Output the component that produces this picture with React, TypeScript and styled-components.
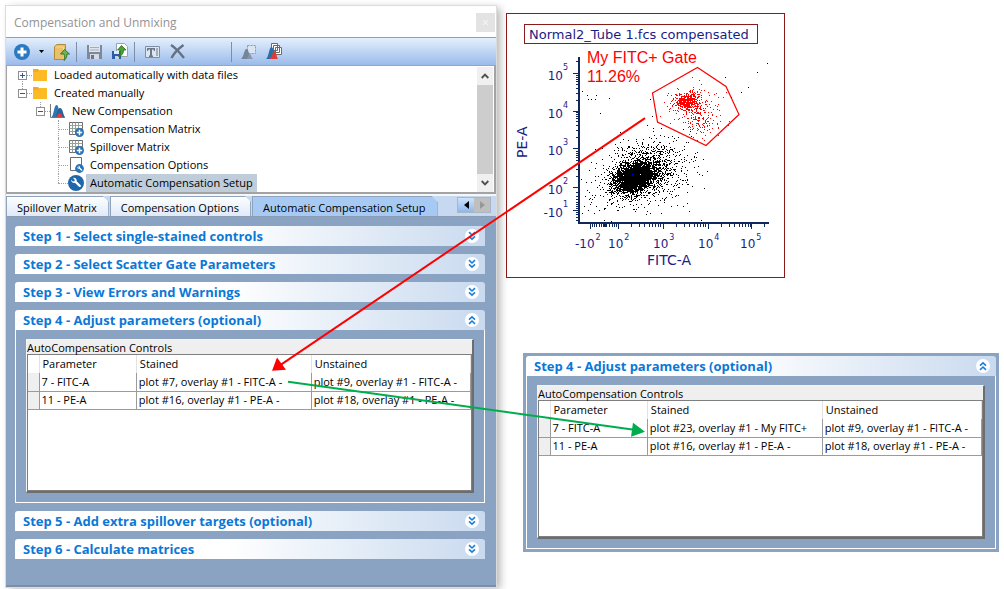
import React from "react";
import styled, { createGlobalStyle, css } from "styled-components";

const GlobalStyle = createGlobalStyle`
  *, *::before, *::after { box-sizing: border-box; }
  body {
    margin: 0;
    background: #fff;
    color: #000;
    font: 11px/18px "Open Sans", "Noto Sans", sans-serif;
  }
  button { font: inherit; color: inherit; margin: 0; padding: 0; border: 0; background: none; }
`;

const steel = "#8aa3c2";
const navy = "#1c1c86";
const maroon = "#8b1a1a";

/* ---------- page ---------- */

const Page = styled.main`
  position: relative;
  display: grid;
  grid-template-columns: minmax(0, 490fr) minmax(0, 493fr);
  column-gap: 10px;
  align-items: start;
  padding: 6px 5px 3px 6px;
`;

const Aside = styled.div`
  display: flex;
  flex-direction: column;
  align-items: flex-start;
  gap: 75px;
  padding-top: 7px;
`;

const Annotations = styled.svg`
  position: absolute;
  inset: 0;
  width: 100%;
  height: 100%;
  pointer-events: none;
`;

/* ---------- window ---------- */

const Window = styled.section`
  background: ${steel};
  border-bottom: 2px solid #7f8fa3;
  box-shadow: 0 0 0 1px #dcdcdc, 4px 2px 8px rgba(0, 0, 0, 0.3);
`;

const TitleBar = styled.header`
  display: flex;
  align-items: center;
  justify-content: space-between;
  height: 32px;
  padding: 2px 1px 0 8px;
  background: #fff;
  border-bottom: 1px solid #9d9d9d;
`;

const Title = styled.h1`
  margin: 0;
  font-size: 12px;
  font-weight: 400;
  color: #939393;
`;

const CloseButton = styled.button`
  width: 19px;
  height: 19px;
  background: #e3e3e3;
  color: #f8f8f8;
  font-size: 12px;
  line-height: 16px;
`;

const Toolbar = styled.div`
  display: flex;
  align-items: center;
  height: 27px;
  padding-left: 8px;
  background: linear-gradient(#e4effd, #9bbbea);
`;

const ToolButton = styled.button<{ $gap?: number }>`
  display: flex;
  flex: none;
  margin-right: ${(p) => p.$gap ?? 0}px;
`;

const ToolDivider = styled.span<{ $gap: number }>`
  width: 1px;
  height: 20px;
  margin-right: ${(p) => p.$gap}px;
  background: #7d8ea6;
`;

/* ---------- tree ---------- */

const TreePane = styled.div`
  display: flex;
  height: 129px;
  background: #fff;
  border: 1px solid #a3a3a3;
  border-width: 1px 2px 2px 1px;
`;

const Tree = styled.ul`
  flex: 1;
  margin: 0;
  padding: 0 0 0 7px;
  list-style: none;
`;

const TreeRow = styled.li<{ $level: number }>`
  display: flex;
  align-items: center;
  height: 18px;
  padding-left: ${(p) => p.$level * 18}px;
`;

const Branch = styled.span<{ $line: "down" | "up" | "full" }>`
  position: relative;
  display: flex;
  align-items: center;
  width: 18px;
  height: 18px;
  padding-left: 4px;
  &::before {
    content: "";
    position: absolute;
    left: 8px;
    top: ${(p) => (p.$line === "down" ? 9 : 0)}px;
    bottom: ${(p) => (p.$line === "up" ? 9 : 0)}px;
    border-left: 1px dotted #a0a0a0;
  }
  &::after {
    content: "";
    position: absolute;
    left: 8px;
    right: 0;
    top: 9px;
    border-top: 1px dotted #a0a0a0;
  }
`;

const Expander = styled.button`
  position: relative;
  z-index: 1;
  display: flex;
  width: 9px;
  height: 9px;
  background: #fff;
`;

const TreeIcon = styled.span`
  display: flex;
  align-items: center;
  width: 18px;
  height: 18px;
`;

const TreeLabel = styled.span<{ $selected?: boolean }>`
  padding: 0 4px;
  white-space: nowrap;
  background: ${(p) => (p.$selected ? "#bfcddb" : "transparent")};
`;

const ScrollBar = styled.div`
  display: flex;
  flex-direction: column;
  width: 16px;
  margin: 1px 1px 0 0;
  background: #f0f0f0;
`;

const ScrollButton = styled.button`
  display: flex;
  align-items: center;
  justify-content: center;
  height: 18px;
`;

const ScrollThumb = styled.div`
  flex: 1;
  background: #cdcdcd;
`;

/* ---------- tabs ---------- */

const TabStrip = styled.div`
  display: flex;
  align-items: flex-end;
  justify-content: space-between;
  height: 23px;
  padding-right: 5px;
  background: #c6d9f1;
  border-top: 2px solid #f4f6f9;
  border-bottom: 1px solid #8b9db5;
`;

const TabList = styled.div`
  display: flex;
  gap: 1px;
`;

const Tab = styled.button<{ $active?: boolean }>`
  height: 20px;
  padding: 2px 11px 0 10px;
  white-space: nowrap;
  clip-path: polygon(0 0, calc(100% - 6px) 0, 100% 6px, 100% 100%, 0 100%);
  border: 1px solid #8fa3bd;
  border-bottom: 0;
  line-height: 18px;
  background: ${(p) => (p.$active ? "#a6caf3" : "linear-gradient(#fdfeff, #dfeaf8)")};
`;

const TabScroller = styled.div`
  display: flex;
  align-self: flex-start;
  margin-top: 1px;
  border: 1px solid #a9b6c6;
`;

const TabArrow = styled.button`
  display: flex;
  align-items: center;
  justify-content: center;
  width: 16px;
  height: 14px;
  background: linear-gradient(#cfe2fb, #8fb7ec);
  &:disabled { background: #bfbfbf; }
`;

/* ---------- steps ---------- */

const Steps = styled.div`
  display: flex;
  flex-direction: column;
  gap: 8px;
  padding: 9px 11px 26px 9px;
`;

const StepHeader = styled.button`
  display: flex;
  align-items: center;
  justify-content: space-between;
  width: 100%;
  height: 20px;
  padding: 0 6px 0 8px;
  border-radius: 3px 3px 0 0;
  background: linear-gradient(90deg, #fff 45%, #c9daef);
  color: #0a78d6;
  font-size: 13px;
  font-weight: 700;
  white-space: nowrap;
`;

const StepBody = styled.div`
  padding: 9px 10px;
  border: 1px solid #fff;
  border-top: 0;
`;

const Callout = styled.div`
  align-self: stretch;
  margin-left: 17px;
  padding: 3px;
  background: ${steel};
`;

/* ---------- controls grid ---------- */

const GridBox = styled.div`
  height: 154px;
  border: 1px solid;
  border-color: #f4f4f4 #6d6d6d #6d6d6d #f4f4f4;
  border-right-width: 2px;
  border-bottom-width: 2px;
  background: #efefef;
`;

const GridArea = styled.div`
  height: 137px;
  border: 1px solid #7f7f7f;
  background: #fff;
`;

const Table = styled.table`
  width: 100%;
  table-layout: fixed;
  border-collapse: collapse;
`;

const HandleCol = styled.col`
  width: 11px;
`;

const ParameterCol = styled.col`
  width: 22%;
`;

const UnstainedCol = styled.col`
  width: 36%;
`;

const GridTitle = styled.div`
  height: 14px;
  line-height: 16px;
`;

const cell = css`
  height: 18px;
  padding: 0 0 0 2px;
  overflow: hidden;
  text-align: left;
  font-weight: 400;
  line-height: 16px;
  white-space: nowrap;
`;

const HeadCell = styled.th`
  ${cell}
  padding-left: 3px;
  border-right: 1px solid #e2e2e2;
`;

const BodyCell = styled.td`
  ${cell}
  border-right: 1px solid #9b9b9b;
  border-bottom: 1px solid #9b9b9b;
`;

const RowHandle = styled(BodyCell)`
  background: #efefef;
`;

const Figure = styled.figure`
  margin: 0;
  width: 279px;
  max-width: 100%;
  border: 1px solid ${maroon};
  svg { display: block; width: 100%; }
`;

/* ---------- icons ---------- */

const Chevrons = ({ up }: { up?: boolean }) => (
  <svg width="14" height="14" viewBox="0 0 14 14" aria-hidden="true">
    <circle cx="7" cy="7" r="7" fill="#fff" />
    <g fill="none" stroke="#1a7fd8" strokeWidth="1.6" transform={up ? "rotate(180 7 7)" : undefined}>
      <path d="M4 3.2 7 6 10 3.2M4 7.4 7 10.2 10 7.4" />
    </g>
  </svg>
);

const AddIcon = () => (
  <svg width="16" height="16" viewBox="0 0 16 16">
    <circle cx="8" cy="8" r="8" fill="#2b79c2" />
    <path d="M8 3.5v9M3.5 8h9" stroke="#fff" strokeWidth="3" />
  </svg>
);

const CaretIcon = () => (
  <svg width="5" height="3" viewBox="0 0 5 3">
    <path d="M0 0h5L2.500 3z" fill="#000" />
  </svg>
);

const ImportIcon = () => (
  <svg width="17" height="18" viewBox="0 0 17 18">
    <path d="M1.500 3.500 4 1.500h8.500V15l-2 1.500h-9z" fill="#e9c06a" stroke="#b38a35" />
    <path d="M2.500 4h8v12" fill="none" stroke="#f4d893" />
    <path d="M11.500 6.500 16.500 11H14c0 3-1 5-3 6.500.7-2.500.4-4.500 0-6.500H7.500z" fill="#6cb84f" stroke="#2f6b24" strokeWidth=".9" />
  </svg>
);

const SaveIcon = () => (
  <svg width="15" height="16" viewBox="0 0 15 16">
    <path d="M0 1h15v14H0z" fill="#7d8999" />
    <path d="M2 1h11v7H2z" fill="#dfe5ee" />
    <path d="M3 3.500h9M3 6h9" stroke="#a3adbb" />
    <path d="M3 10h9v5H3z" fill="#d4dbe6" />
    <path d="M4 11h3v4H4z" fill="#6b7787" />
  </svg>
);

const ExportIcon = () => (
  <svg width="16" height="17" viewBox="0 0 16 17">
    <path d="M4.500.5h8l3 3v10h-11z" fill="#fff" stroke="#97a2b2" />
    <path d="M0 8h9v8H0z" fill="#2c5ca8" />
    <path d="M2 8h5v3H2z" fill="#dfe8f5" />
    <path d="M3 13h4v3H3z" fill="#c4d2e8" />
    <path d="M9.500 2.500 14 7h-2.500c0 4-2 6-5 6.500C8.500 12 8.500 10 8 7H5.500z" fill="#46a636" stroke="#246c1b" strokeWidth=".8" />
  </svg>
);

const RenameIcon = () => (
  <svg width="15" height="14" viewBox="0 0 15 14">
    <path d="M.5 1.500h14v11H.5z" fill="#dde5f0" stroke="#7f8ea3" />
    <path d="M2 3h8v3H9L8.500 4.500H7v6h1V12H4v-1.500h1v-6H3.500L3 6H2z" fill="#6b788a" />
    <path d="M12 3v8" stroke="#6b788a" />
  </svg>
);

const DeleteIcon = () => (
  <svg width="15" height="15" viewBox="0 0 15 15">
    <path d="M1 1C6 4 10 9 14 14M13.500 1C8 5 4 9 1.500 14" fill="none" stroke="#667283" strokeWidth="2.400" />
  </svg>
);

const GateIcon = () => (
  <svg width="16" height="16" viewBox="0 0 16 16">
    <path d="M6.500 1.500h8v8h-8z" fill="#dbe5f2" stroke="#8c9bb0" strokeDasharray="2 1" />
    <path d="M0 15C3 13 3 5 5.500 5S8 13 11 15z" fill="#74849b" />
    <path d="M6 15c1-3 2-5 3-5s1 3 3 5z" fill="#8996aa" />
  </svg>
);

const GateStackIcon = () => (
  <svg width="17" height="17" viewBox="0 0 17 17">
    <path d="M5.500.5h6v7h-6zM7.500 2.500h6v7h-6zM9.500 4.500h6v7h-6z" fill="#fff" stroke="#6b6b6b" />
    <path d="M0 16C3 14 3 4 5.500 4S8 14 10 16z" fill="#2c6fa8" />
    <path d="M4 16c2-3 3-8 4.500-8s2 6 3.500 8z" fill="#dc3b36" />
  </svg>
);

const ExpanderIcon = ({ open }: { open: boolean }) => (
  <svg width="9" height="9" viewBox="0 0 9 9" shapeRendering="crispEdges">
    <path d="M.5.5h8v8h-8z" fill="#fff" stroke="#8f8f8f" />
    <path d={open ? "M2 4.500h5" : "M2 4.500h5M4.500 2v5"} stroke="#33559e" />
  </svg>
);

const FolderIcon = () => (
  <svg width="16" height="14" viewBox="0 0 16 14">
    <path d="M1 1h5l1 1h8v11H1z" fill="#f7a81c" />
    <path d="M7 2l-1 2H1v9h14V2z" fill="#fcbb24" />
  </svg>
);

const HistogramIcon = () => (
  <svg width="16" height="16" viewBox="0 0 16 16">
    <path d="M.5 1v13.500H15" fill="none" stroke="#777" />
    <path d="M1.500 14C4 12 4 2 6.500 2S9 10 10 14z" fill="#2d78b2" />
    <path d="M6 14c1-2 1-9 4-9s3 7 5 9z" fill="#2b6299" />
    <path d="M6.500 14c1-2 2-4 3-4s2 2 3 4z" fill="#e0403c" />
  </svg>
);

const MatrixIcon = () => (
  <svg width="16" height="16" viewBox="0 0 16 16">
    <path d="M1.500 1.500h13v12h-13z" fill="#fff" stroke="#6d6d6d" />
    <path d="M1.500 4.500h13M1.500 7.500h13M1.500 10.500h13M4.500 1.500v12M7.500 1.500v12M10.500 1.500v12" stroke="#93a39a" />
    <circle cx="11.500" cy="11.500" r="4.500" fill="#2873b8" />
    <path d="M11.500 8.800v5.400M8.800 11.500h5.400" stroke="#fff" strokeWidth="1.500" />
  </svg>
);

const wrench =
  "M3.200 4.800 4.900 6.500 6.500 6.200 6.700 4.700 5 3C7 2.400 9 3.800 8.700 6.200L12.700 10.200C13.600 11.200 12 12.800 11 11.800L7.100 7.900C5 8.600 2.900 7 3.200 4.800z";

const OptionsIcon = () => (
  <svg width="16" height="16" viewBox="0 0 16 16">
    <path d="M2.500.5h11v13h-11z" fill="#fff" stroke="#6d6d6d" />
    <circle cx="11.500" cy="11.500" r="4.400" fill="#2873b8" />
    <path d={wrench} fill="#fff" transform="translate(7.200 7.200) scale(.55)" />
  </svg>
);

const WrenchIcon = () => (
  <svg width="16" height="16" viewBox="0 0 16 16">
    <circle cx="8" cy="8" r="8" fill="#1f67ab" />
    <path d={wrench} fill="#fff" />
  </svg>
);

const ScrollChevron = ({ down }: { down?: boolean }) => (
  <svg width="8" height="6" viewBox="0 0 8 6">
    <path d={down ? "M.7 1 4 4.300 7.300 1" : "M.7 5 4 1.700 7.300 5"} fill="none" stroke="#505050" strokeWidth="1.900" />
  </svg>
);

/* ---------- scatter plot ---------- */

function makeRandom(seed: number) {
  let s = seed;
  return () => {
    s = (s * 1664525 + 1013904223) % 4294967296;
    return s / 4294967296;
  };
}

type Cluster = { n: number; x: number; y: number; sx: number; sy: number; tilt?: number };

function dots(clusters: Cluster[], seed: number, extra: number[][] = []) {
  const rnd = makeRandom(seed);
  const gauss = () => Math.sqrt(-2 * Math.log(rnd() + 1e-9)) * Math.cos(2 * Math.PI * rnd());
  const pts: number[][] = [...extra];
  clusters.forEach((c) => {
    for (let i = 0; i < c.n; i++) {
      const a = gauss();
      const b = gauss();
      const x = Math.round(c.x + a * c.sx);
      const y = Math.round(c.y + b * c.sy + (c.tilt ?? 0) * a * c.sx);
      if (x > 580 && x < 760 && y > 60 && y < 222) pts.push([x, y]);
    }
  });
  return pts.map(([x, y]) => `M${x} ${y}h1v1h-1z`).join("");
}

const ungated = dots(
  [
    { n: 2400, x: 633, y: 177, sx: 9, sy: 7, tilt: -0.25 },
    { n: 1300, x: 638, y: 175, sx: 14, sy: 10, tilt: -0.3 },
    { n: 480, x: 656, y: 171, sx: 19, sy: 16, tilt: -0.1 },
    { n: 90, x: 645, y: 151, sx: 22, sy: 5 },
    { n: 130, x: 615, y: 192, sx: 26, sy: 14 },
  ],
  11,
  [[767, 63], [757, 72], [725, 77], [748, 87], [741, 92], [731, 97], [582, 91], [587, 95], [596, 95], [588, 99],
   [591, 99], [595, 99], [609, 98], [600, 113], [650, 99], [652, 116], [647, 125], [707, 171], [704, 188], [701, 220], [689, 211]],
);

const gated = dots(
  [
    { n: 320, x: 687, y: 101, sx: 5, sy: 4 },
    { n: 190, x: 690, y: 103, sx: 12, sy: 9 },
    { n: 130, x: 702, y: 120, sx: 9, sy: 9 },
  ],
  5,
);

const yTicks = [
  { y: 73, base: "10", exp: "5" },
  { y: 111, base: "10", exp: "4" },
  { y: 148, base: "10", exp: "3" },
  { y: 187, base: "10", exp: "2" },
  { y: 210, base: "-10", exp: "1" },
];
const xTicks = [
  { x: 590, label: 575, base: "-10", exp: "2" },
  { x: 618, label: 608, base: "10", exp: "2" },
  { x: 663, label: 653, base: "10", exp: "3" },
  { x: 708, label: 698, base: "10", exp: "4" },
  { x: 751, label: 740, base: "10", exp: "5" },
];

const logs = [2, 3, 4, 5, 6, 7, 8, 9].map(Math.log10);
const yMinor = [
  ...[187, 148, 111].flatMap((y) => logs.map((l) => y - l * 38)),
  61, 192, 196, 199, 202, 204, 206, 208, 212, 214, 217, 220,
];
const xMinor = [
  ...[618, 663, 708].flatMap((x) => logs.map((l) => x + l * 44)),
  764, 592, 594, 596, 599, 601, 603, 604, 605, 606, 609, 612, 614, 616,
];

const tickText = { fontFamily: '"DejaVu Sans", sans-serif', fill: navy };

const ScatterPlot = () => (
  <svg viewBox="507 14 277 263" role="img" aria-label="Scatter plot of FITC-A against PE-A">
    <g shapeRendering="crispEdges" fill="none">
      <path d="M524.500 24.500h233v19h-233z" stroke={maroon} />
      <path d="M579 57v167M578 223h191" stroke="#10285c" strokeWidth="2" />
      <path
        stroke="#10285c"
        d={[
          ...yTicks.map((t) => `M573 ${t.y + 0.5}h6`),
          ...yMinor.map((y) => `M576 ${Math.round(y) + 0.5}h3`),
          ...xTicks.map((t) => `M${t.x + 0.5} 223v6`),
          ...xMinor.map((x) => `M${Math.round(x) + 0.5} 223v4`),
        ].join("")}
      />
    </g>
    <path d={ungated} fill="#000" shapeRendering="crispEdges" />
    <path d={gated} fill="#f00" shapeRendering="crispEdges" />
    <path d="M632 174h1v1h-1zM607 194h1v1h-1zM647 195h1v1h-1z" fill="#00f" />
    <path d="M697.500 67.500 726 86.500 739 114.500 706 145.500 657.500 122 652.500 93z" fill="none" stroke="#f00" strokeWidth="1.200" />
    <text x="529" y="39" fontSize="13" {...tickText}>Normal2_Tube 1.fcs compensated</text>
    <g fontFamily='"Liberation Sans", sans-serif' fontSize="16" fill="#f00">
      <text x="587" y="63">My FITC+ Gate</text>
      <text x="587" y="82">11.26%</text>
    </g>
    {yTicks.map((t) => (
      <g key={t.exp} {...tickText}>
        <text x="563" y={t.y + 7} fontSize="12" textAnchor="end">{t.base}</text>
        <text x="563" y={t.y - 3} fontSize="8">{t.exp}</text>
      </g>
    ))}
    {xTicks.map((t) => (
      <text key={t.x} x={t.label} y="248" fontSize="12" {...tickText}>
        {t.base}
        <tspan dx="1" dy="-8" fontSize="8">{t.exp}</tspan>
      </text>
    ))}
    <text x="647" y="265" fontSize="14" {...tickText}>FITC-A</text>
    <text transform="translate(527 158) rotate(-90)" fontSize="14" {...tickText}>PE-A</text>
  </svg>
);

/* ---------- pieces ---------- */

type ControlRow = [string, string, string];

const ControlsGrid = ({ rows }: { rows: ControlRow[] }) => (
  <GridBox>
    <GridTitle>AutoCompensation Controls</GridTitle>
    <GridArea>
      <Table aria-label="AutoCompensation Controls">
        <colgroup>
          <HandleCol />
          <ParameterCol />
          <col />
          <UnstainedCol />
        </colgroup>
        <thead>
          <tr>
            <HeadCell />
            <HeadCell>Parameter</HeadCell>
            <HeadCell>Stained</HeadCell>
            <HeadCell>Unstained</HeadCell>
          </tr>
        </thead>
        <tbody>
          {rows.map((row) => (
            <tr key={row[0]}>
              <RowHandle />
              {row.map((text) => (
                <BodyCell key={text}>{text}</BodyCell>
              ))}
            </tr>
          ))}
        </tbody>
      </Table>
    </GridArea>
  </GridBox>
);

const Step = ({ title, children }: { title: string; children?: React.ReactNode }) => (
  <section>
    <StepHeader type="button" aria-expanded={!!children}>
      {title}
      <Chevrons up={!!children} />
    </StepHeader>
    {children && <StepBody>{children}</StepBody>}
  </section>
);

type Node = {
  label: string;
  level: number;
  line: "down" | "up" | "full";
  icon: React.ReactNode;
  open?: boolean;
  selected?: boolean;
};

const nodes: Node[] = [
  { label: "Loaded automatically with data files", level: 0, line: "down", icon: <FolderIcon />, open: false },
  { label: "Created manually", level: 0, line: "up", icon: <FolderIcon />, open: true },
  { label: "New Compensation", level: 1, line: "up", icon: <HistogramIcon />, open: true },
  { label: "Compensation Matrix", level: 2, line: "full", icon: <MatrixIcon /> },
  { label: "Spillover Matrix", level: 2, line: "full", icon: <MatrixIcon /> },
  { label: "Compensation Options", level: 2, line: "full", icon: <OptionsIcon /> },
  { label: "Automatic Compensation Setup", level: 2, line: "up", icon: <WrenchIcon />, selected: true },
];

const before: ControlRow[] = [
  ["7 - FITC-A", "plot #7, overlay #1 - FITC-A -", "plot #9, overlay #1 - FITC-A -"],
  ["11 - PE-A", "plot #16, overlay #1 - PE-A -", "plot #18, overlay #1 - PE-A -"],
];
const after: ControlRow[] = [
  ["7 - FITC-A", "plot #23, overlay #1 - My FITC+", "plot #9, overlay #1 - FITC-A -"],
  before[1],
];

export default function App() {
  return (
    <>
      <GlobalStyle />
      <Page>
        <Window>
          <TitleBar>
            <Title>Compensation and Unmixing</Title>
            <CloseButton type="button" aria-label="Close">×</CloseButton>
          </TitleBar>
          <Toolbar>
            <ToolButton $gap={9} aria-label="Add"><AddIcon /></ToolButton>
            <ToolButton $gap={9} aria-label="Add menu"><CaretIcon /></ToolButton>
            <ToolButton $gap={6} aria-label="Import"><ImportIcon /></ToolButton>
            <ToolDivider $gap={10} />
            <ToolButton $gap={10} aria-label="Save" disabled><SaveIcon /></ToolButton>
            <ToolButton $gap={6} aria-label="Export"><ExportIcon /></ToolButton>
            <ToolDivider $gap={10} />
            <ToolButton $gap={10} aria-label="Rename" disabled><RenameIcon /></ToolButton>
            <ToolButton $gap={46} aria-label="Delete" disabled><DeleteIcon /></ToolButton>
            <ToolDivider $gap={9} />
            <ToolButton $gap={9} aria-label="Create gate" disabled><GateIcon /></ToolButton>
            <ToolButton aria-label="Create gates"><GateStackIcon /></ToolButton>
          </Toolbar>
          <TreePane>
            <Tree>
              {nodes.map((n) => (
                <TreeRow key={n.label} $level={n.level}>
                  <Branch $line={n.line}>
                    {n.open !== undefined && (
                      <Expander type="button" aria-label={n.open ? "Collapse" : "Expand"}>
                        <ExpanderIcon open={n.open} />
                      </Expander>
                    )}
                  </Branch>
                  <TreeIcon>{n.icon}</TreeIcon>
                  <TreeLabel $selected={n.selected}>{n.label}</TreeLabel>
                </TreeRow>
              ))}
            </Tree>
            <ScrollBar>
              <ScrollButton type="button" aria-label="Scroll up"><ScrollChevron /></ScrollButton>
              <ScrollThumb />
              <ScrollButton type="button" aria-label="Scroll down"><ScrollChevron down /></ScrollButton>
            </ScrollBar>
          </TreePane>
          <TabStrip>
            <TabList role="tablist">
              <Tab role="tab">Spillover Matrix</Tab>
              <Tab role="tab">Compensation Options</Tab>
              <Tab role="tab" aria-selected $active>Automatic Compensation Setup</Tab>
            </TabList>
            <TabScroller>
              <TabArrow type="button" aria-label="Previous tabs">
                <svg width="5" height="8" viewBox="0 0 5 8"><path d="M5 0v8L0 4z" fill="#000" /></svg>
              </TabArrow>
              <TabArrow type="button" aria-label="Next tabs" disabled>
                <svg width="5" height="8" viewBox="0 0 5 8"><path d="M0 0v8l5-4z" fill="#989898" /></svg>
              </TabArrow>
            </TabScroller>
          </TabStrip>
          <Steps>
            <Step title="Step 1 - Select single-stained controls" />
            <Step title="Step 2 - Select Scatter Gate Parameters" />
            <Step title="Step 3 - View Errors and Warnings" />
            <Step title="Step 4 - Adjust parameters (optional)">
              <ControlsGrid rows={before} />
            </Step>
            <Step title="Step 5 - Add extra spillover targets (optional)" />
            <Step title="Step 6 - Calculate matrices" />
          </Steps>
        </Window>
        <Aside>
          <Figure><ScatterPlot /></Figure>
          <Callout>
            <Step title="Step 4 - Adjust parameters (optional)">
              <ControlsGrid rows={after} />
            </Step>
          </Callout>
        </Aside>
        <Annotations viewBox="0 0 1004 589" preserveAspectRatio="none" aria-hidden="true">
          <path d="M645 118 281 364" stroke="#f00" strokeWidth="2" />
          <path d="M272 370 277 357 286 369z" fill="#f00" />
          <path d="M288 381 634 429" stroke="#00ad4e" strokeWidth="2" />
          <path d="M645 431 631 436 633 422z" fill="#00ad4e" />
        </Annotations>
      </Page>
    </>
  );
}
